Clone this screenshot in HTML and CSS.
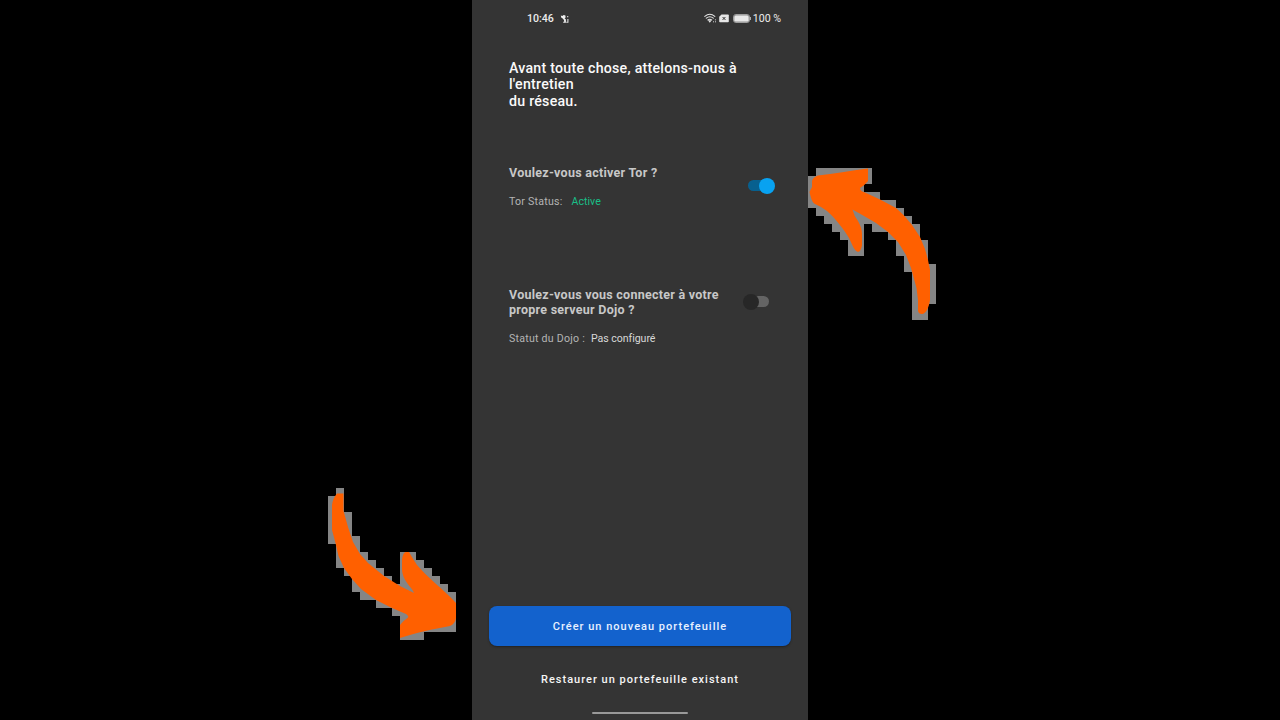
FILE: index.html
```html
<!DOCTYPE html>
<html lang="fr">
<head>
<meta charset="utf-8">
<title>Configuration du réseau</title>
<link rel="stylesheet" href="styles.css">
</head>
<body>
<main class="stage">
  <section class="phone">
    <header class="status">
      <div class="status-left">
        <span>10:46</span>
        <svg class="notif" width="10" height="10" viewBox="0 0 10 10"><path d="M.8 1.6 2.3 2l1.400-1 1.700.6.2 1.800-1 .8 1.300 1.400V8.800H3.200V7.700h1L4 6 2.400 4.200 1.200 3.600z" fill="#eee"/><path d="M7.700 2v1.300M7.900 5v3.200H6.300" stroke="#ddd" stroke-width="1.100" fill="none"/></svg>
      </div>
      <div class="status-right">
        <svg width="13" height="11" viewBox="0 0 13 11" fill="none" stroke="#e4e4e4" stroke-width="1.1" stroke-linecap="round"><path d="M.8 3.4Q5.800-.9 10.800 3.400M2.300 5.200Q5.800 2.300 9.300 5.200M3.900 7Q5.800 5.400 7.700 7"/><path d="M5.100 7.900h1.400l-.7.9z" fill="#e4e4e4"/><path d="M9.400 8.800h.1M11.400 6.800v.1M11.400 8.800h.1" stroke-width="1"/></svg>
        <svg class="sim" width="10" height="9" viewBox="0 0 10 9"><path d="M2.500.5H9a.8.8 0 0 1 .8.8v6.200a.8.8 0 0 1-.8.8H1a.8.8 0 0 1-.8-.8V2.800z" fill="#e6e6e6"/><path d="m3.600 3 2.800 2.900M6.400 3 3.600 5.900" stroke="#333" stroke-width="1"/></svg>
        <svg class="battery" width="19" height="9" viewBox="0 0 19 9"><rect x=".5" y=".5" width="16" height="8" rx="2.4" fill="none" stroke="#aaa" stroke-width=".9"/><rect x="1.2" y="1.2" width="14.6" height="6.6" rx="1.500" fill="#e8e8e8"/><path d="M17.500 3v3" stroke="#aaa" stroke-width="1"/></svg>
        <span>100 %</span>
      </div>
    </header>
    <h1 class="title">Avant toute chose, attelons-nous à l'entretien<br>du réseau.</h1>
    <div class="option tor">
      <div class="option-text">
        <h2>Voulez-vous activer Tor ?</h2>
        <p><span class="label">Tor Status:</span><span class="active">Active</span></p>
      </div>
      <div class="toggle on"><i></i></div>
    </div>
    <div class="option dojo">
      <div class="option-text">
        <h2>Voulez-vous vous connecter à votre<br>propre serveur Dojo ?</h2>
        <p><span class="label">Statut du Dojo :</span><span class="none">Pas configuré</span></p>
      </div>
      <div class="toggle off"><i></i></div>
    </div>
    <footer class="actions">
      <button class="create">Créer un nouveau portefeuille</button>
      <button class="restore">Restaurer un portefeuille existant</button>
      <div class="home"></div>
    </footer>
  </section>
  <svg class="arrow arrow-right" width="128" height="152" viewBox="808 168 128 152">
    <path class="edge" d="M816 168H872V184H864V192H880V200H896V208H904V216H912V224H920V240H928V264H936V304H928V320H912V272H904V256H896V240H888V232H872V224H864V256H848V240H840V232H832V224H824V216H816V208H808V176H816Z"/>
    <path class="fill" d="M868 168.500V181Q865 185 860 188Q860 191 865 192.500L880 199.500L896 208L904 215.500L912 225L920 237L925 249L928 260L930 270V300C929 307 926 314 922 314Q918 314 918 310V300L916.500 288L911 268L906 255L898 242L888 232L876 223L864 216L852.500 209.500Q854 216 858 221Q862 228 862 234V245C861 251 859 252.500 857 251.500C854 250 852 244 849 238C843 228 835 218 827 211Q822 207 816 204.500Q812 203 810.500 196L809.500 192L812 187V181Q813 177 818 175.500C834 173.500 850 171 868 168.500Z"/>
  </svg>
  <svg class="arrow arrow-left" width="128" height="152" viewBox="328 488 128 152">
    <path class="edge" d="M336 488H344V512H352V536H360V552H368V560H376V568H384V576H392V584H400V552H416V560H424V568H432V576H440V584H448V592H456V632H424V640H400V616H392V608H376V600H360V592H352V576H344V568H336V544H328V496H336Z"/>
    <path class="fill" d="M337 493.500H343.500V511L348 527L353 542L360 554L368 563L384 576L400 586L414 593Q413 590 411 588C406 582 402 576 402 569V560Q403 552 406 552H409Q413 559 417 565C426 576 445 591 456 603V618Q455 624 450 626C433 629 415 633 400 638V625Q403 621 408 617.500Q409 616 406 614L392 608L376 600L361 589L352 579L344 568L338.500 556L335.500 543L332 530V505Q333 498 337 493.500Z"/>
  </svg>
</main>
</body>
</html>
```
FILE: styles.css
```css
* { box-sizing: border-box; }
body { margin: 0; background: #000; font-family: Roboto, sans-serif; }
.stage { position: relative; width: 1280px; height: 720px; overflow: hidden; display: flex; justify-content: center; }
.phone { width: 336px; height: 720px; background: #343434; display: flex; flex-direction: column; }
.status { height: 37px; padding: 0 27px 0 55px; display: flex; justify-content: space-between; align-items: center; color: #ececec; font-size: 10.6px; font-weight: 500; }
.status-left, .status-right { display: flex; align-items: center; }
.status-right { font-weight: 400; }
.notif { margin-left: 6px; margin-top: 1px; }
.sim { margin-left: 2px; }
.battery { margin: 0 1px 0 4px; }
.title { margin: 23px 36px 0 37px; height: 50px; color: #fafafa; font-size: 14.2px; font-weight: 500; line-height: 16.4px; letter-spacing: .24px; }
.option { display: flex; justify-content: space-between; padding-left: 37px; }
.option h2 { margin: 0; color: #c8c8c8; font-size: 12.5px; line-height: 15px; font-weight: 700; letter-spacing: .26px; white-space: nowrap; }
.option p { margin: 15px 0 0; line-height: 14px; font-size: 10.6px; display: flex; }
.label { color: #b5b5b5; letter-spacing: .24px; }
.active { color: #19bf87; margin-left: 9px; }
.none { color: #d8d8d8; margin-left: 6px; letter-spacing: -.05px; }
.tor { margin-top: 55px; height: 122px; padding-right: 33px; }
.dojo { height: 70px; padding-right: 37px; }
.toggle { width: 27px; height: 11px; border-radius: 6px; display: flex; align-items: center; }
.toggle i { width: 16px; height: 16px; border-radius: 50%; flex: none; }
.on { margin-top: 15px; justify-content: flex-end; background: linear-gradient(#07608f, #07608f) 0 0 / 22px 100% no-repeat; }
.on i { background: #08a2f1; }
.off { width: 26px; margin-top: 9px; margin-right: 2px; background: linear-gradient(#646464, #646464) 100% 0 / 18px 100% no-repeat; }
.off i { background: #272727; }
.actions { margin-top: auto; height: 114px; padding: 0 17px; display: flex; flex-direction: column; align-items: center; }
.actions button { border: 0; font-family: inherit; font-weight: 500; color: #f5f5f5; padding: 0; letter-spacing: 1.01px; font-size: 11px; }
.actions .create { width: 302px; height: 40px; border-radius: 8px; background: #1362cd; color: #e8f1ff; box-shadow: 0 1px 2px #222; }
.actions .restore { height: 36px; margin-top: 15px; background: transparent; }
.home { width: 96px; height: 2px; margin-top: 15px; border-radius: 1px; background: #999; }
.arrow { position: absolute; }
.arrow-right { left: 808px; top: 168px; }
.arrow-left { left: 328px; top: 488px; }
.edge { fill: #858585; }
.fill { fill: #ff6000; }
```
